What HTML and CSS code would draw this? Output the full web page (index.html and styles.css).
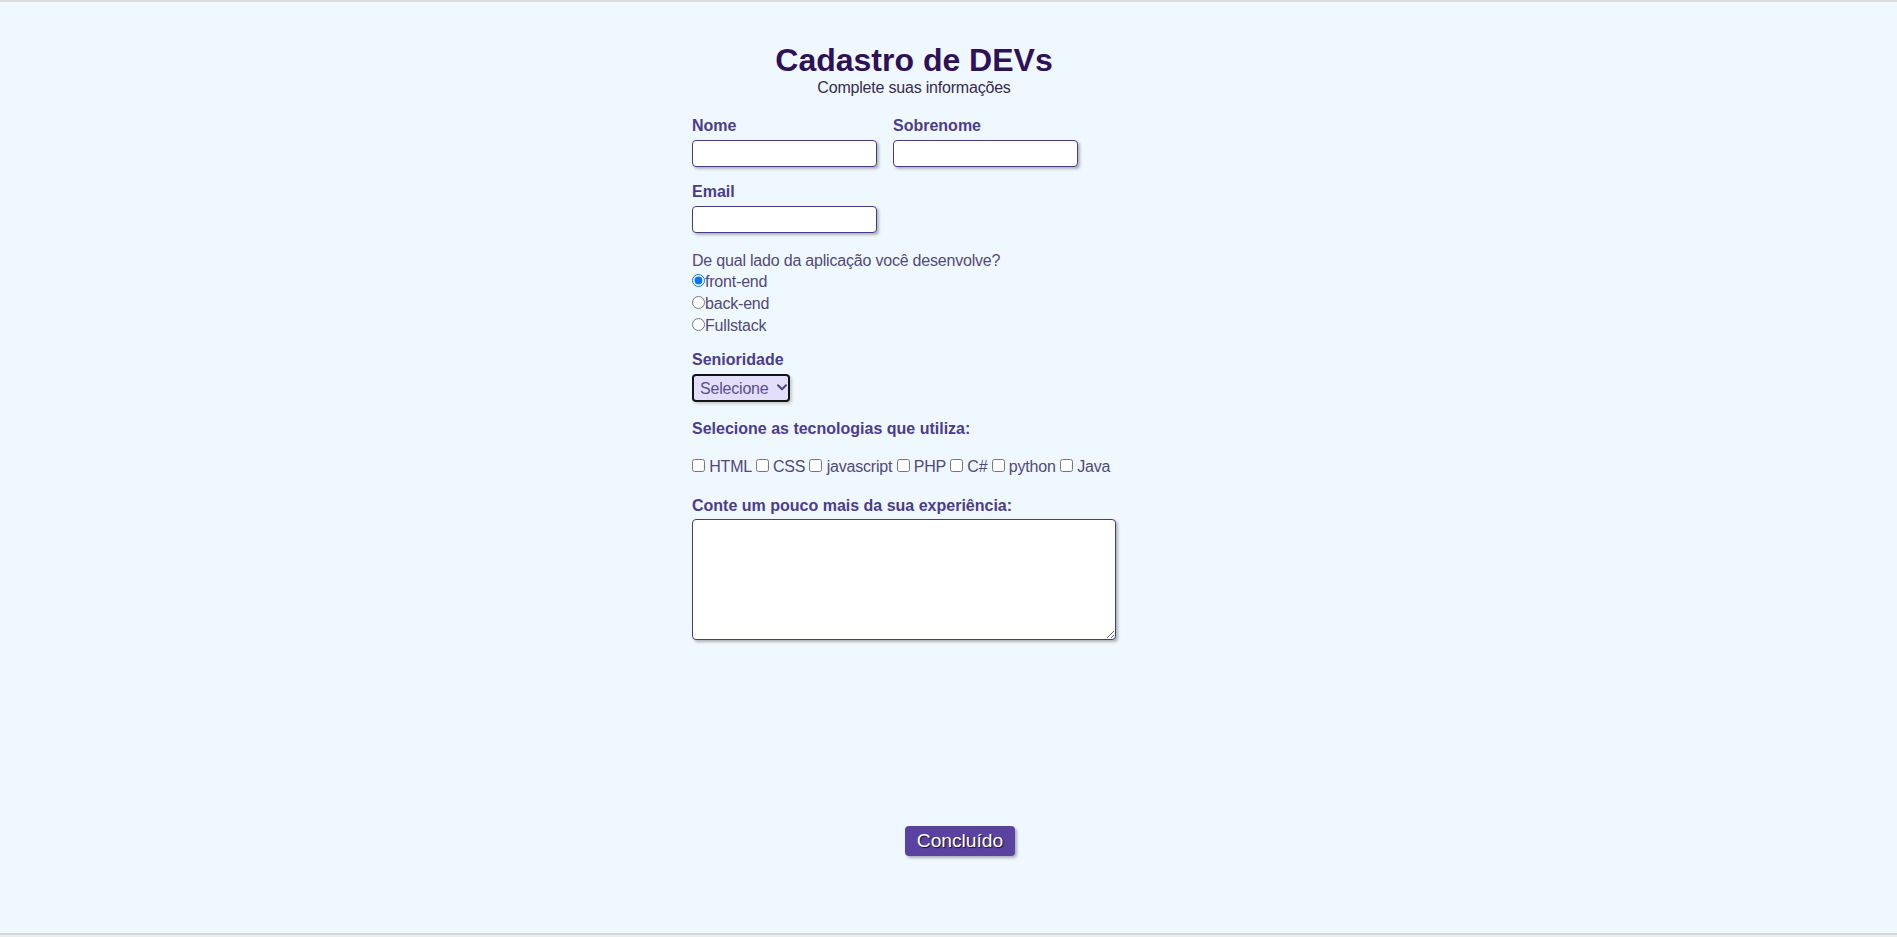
FILE: index.html
```html
<!DOCTYPE html>
<html lang="pt-BR">
<head>
<meta charset="utf-8">
<title>Cadastro de DEVs</title>
<link rel="stylesheet" href="styles.css">
</head>
<body>
<div class="page">
  <main class="form">
    <header class="head">
      <h1 class="title">Cadastro de DEVs</h1>
      <p class="subtitle">Complete suas informações</p>
    </header>

    <div class="names">
      <div class="field">
        <label class="lbl" for="nome">Nome</label>
        <input class="txt" id="nome" type="text">
      </div>
      <div class="field">
        <label class="lbl" for="sobrenome">Sobrenome</label>
        <input class="txt" id="sobrenome" type="text">
      </div>
    </div>

    <div class="field email">
      <label class="lbl" for="email">Email</label>
      <input class="txt" id="email" type="email">
    </div>

    <div class="side">
      <p class="question">De qual lado da aplicação você desenvolve?</p>
      <label class="opt"><input class="radio" type="radio" name="lado" checked>front-end</label>
      <label class="opt"><input class="radio" type="radio" name="lado">back-end</label>
      <label class="opt"><input class="radio" type="radio" name="lado">Fullstack</label>
    </div>

    <div class="field senior">
      <label class="lbl" for="senioridade">Senioridade</label>
      <span class="selwrap">
        <select class="sel" id="senioridade">
          <option>Selecione</option>
          <option>Júnior</option>
          <option>Pleno</option>
          <option>Sênior</option>
        </select>
        <svg class="chev" width="10" height="7" viewBox="0 0 10 7" aria-hidden="true"><path d="M1 1.3 L5 5.2 L9 1.3" fill="none" stroke="#4f4580" stroke-width="2" stroke-linecap="round" stroke-linejoin="round"/></svg>
      </span>
    </div>

    <div class="techs">
      <p class="lbl">Selecione as tecnologias que utiliza:</p>
      <p class="checks"><input class="chk" type="checkbox"> HTML <input class="chk" type="checkbox"> CSS <input class="chk" type="checkbox"> javascript <input class="chk" type="checkbox"> PHP <input class="chk" type="checkbox"> C# <input class="chk" type="checkbox"> python <input class="chk" type="checkbox"> Java</p>
    </div>

    <div class="field exp">
      <label class="lbl" for="exp">Conte um pouco mais da sua experiência:</label>
      <textarea class="area" id="exp"></textarea>
    </div>
  </main>

  <div class="actions">
    <button class="btn" type="submit">Concluído</button>
  </div>
</div>
</body>
</html>
```

FILE: styles.css
```css
* {
  margin: 0;
  padding: 0;
  box-sizing: border-box;
}

html {
  background: #ececec;
}

body {
  font-family: "Liberation Sans", Arial, sans-serif;
  font-size: 16px;
  height: 937px;
  overflow: hidden;
}

.page {
  height: 935px;
  background: #f0f8ff;
  border-top: 2px solid #dadada;
  border-bottom: 2px solid #d6d6d6;
  padding-top: 40px;
}

.form {
  width: 444px;
  margin-left: 692px;
}

.head {
  text-align: center;
}

.title {
  font-size: 32px;
  font-weight: bold;
  color: #2e1157;
  line-height: normal;
}

.subtitle {
  color: #352b50;
  letter-spacing: -0.2px;
}

.names {
  display: flex;
  gap: 16px;
  margin-top: 20px;
}

.field {
  display: flex;
  flex-direction: column;
  align-items: flex-start;
}

.lbl {
  font-weight: bold;
  color: #4b3c8c;
}

.txt {
  width: 185px;
  height: 27px;
  margin-top: 5px;
  border: 1px solid #4a3a85;
  border-radius: 4px;
  background: #fff;
  box-shadow: 2px 2px 3px rgba(0, 0, 0, 0.28);
  font: 16px "Liberation Sans", Arial, sans-serif;
  padding: 0 4px;
}

.email {
  margin-top: 16px;
}

.side {
  margin-top: 17px;
  color: #51497a;
  letter-spacing: -0.2px;
}

.question {
  line-height: 21px;
}

.opt {
  display: block;
  line-height: 22px;
}

.radio {
  margin: 0;
}

.senior {
  margin-top: 14px;
}

.selwrap {
  position: relative;
  display: inline-block;
  margin-top: 5px;
}

.sel {
  display: block;
  width: 98px;
  height: 28px;
  -webkit-appearance: none;
  appearance: none;
  background-color: #e3defa;
  border: 2px solid #141414;
  border-radius: 4px;
  color: #5a4e8a;
  font: 16px "Liberation Sans", Arial, sans-serif;
  letter-spacing: -0.2px;
  padding: 0 0 0 6px;
  box-shadow: 2px 2px 3px rgba(0, 0, 0, 0.18);
}

.chev {
  position: absolute;
  right: 3px;
  top: 10px;
  pointer-events: none;
}

.techs {
  margin-top: 18px;
}

.checks {
  margin-top: 20px;
  color: #51497a;
  letter-spacing: -0.2px;
}

.chk {
  margin: 0;
}

.exp {
  margin-top: 21px;
}

.area {
  width: 424px;
  height: 121px;
  margin-top: 4px;
  border: 1px solid #4a3a85;
  border-radius: 4px;
  background: #fff;
  box-shadow: 2px 2px 3px rgba(0, 0, 0, 0.28);
  font: 16px "Liberation Sans", Arial, sans-serif;
  padding: 4px;
}

.actions {
  width: 536px;
  margin-left: 692px;
  margin-top: 186px;
  text-align: center;
}

.btn {
  height: 30px;
  padding: 0 12px;
  border: none;
  border-radius: 4px;
  background: #5a43a0;
  color: #fff;
  font: 19.2px "Liberation Sans", Arial, sans-serif;
  text-shadow: 1px 1px 1px #1a1030;
  box-shadow: 2px 2px 3px rgba(0, 0, 0, 0.3);
  cursor: pointer;
}
```
